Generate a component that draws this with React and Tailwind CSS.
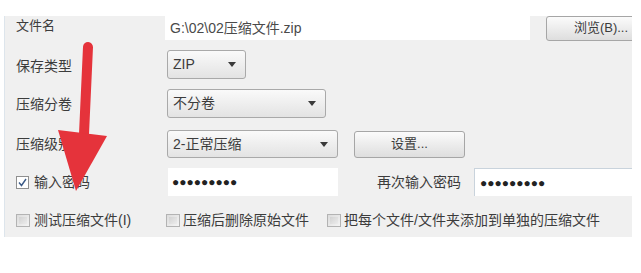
import React from "react";

const font = "font-['Liberation_Sans','Noto_Sans_CJK_SC',sans-serif]";

function Caret() {
  return (
    <svg width="8" height="5" viewBox="0 0 8 5" className="shrink-0">
      <path d="M0 0 H8 L4 5 Z" fill="#3a3a3a" />
    </svg>
  );
}

function Select({ value, width, height = "h-[29px]" }) {
  return (
    <div
      className={`${width} ${height} shrink-0 flex items-center justify-between pl-[5px] pr-[9px] rounded-[3px] border border-[#a9a9a9] bg-gradient-to-b from-[#fafafa] to-[#e3e3e3] text-[14px] text-[#3c3c3c]`}
    >
      <span>{value}</span>
      <Caret />
    </div>
  );
}

function Button({ children, width, height }) {
  return (
    <div
      className={`${width} ${height} flex items-center justify-center rounded-[3px] border border-[#a6a6a6] bg-gradient-to-b from-[#fbfbfb] to-[#dedede] text-[13px] text-[#3c3c3c] shrink-0`}
    >
      {children}
    </div>
  );
}

function Check({ checked }) {
  if (checked) {
    return (
      <div className="w-[13px] h-[13px] border border-[#8f8f8f] bg-white flex items-center justify-center shrink-0">
        <svg width="9" height="9" viewBox="0 0 9 9">
          <path d="M1 4.5 L3.5 7.5 L8 1" fill="none" stroke="#3b5a87" strokeWidth="1.4" />
        </svg>
      </div>
    );
  }
  return (
    <div className="w-[14px] h-[13px] border border-[#b3b3b3] bg-gradient-to-br from-[#dcdcdc] to-[#f4f4f4] p-[2px] shrink-0">
      <div className="w-full h-full bg-gradient-to-br from-[#d2d2d2] to-[#ececec]" />
    </div>
  );
}

export default function App() {
  return (
    <div className={`relative w-[641px] h-[273px] bg-white overflow-hidden pt-[16px] ${font}`}>
      <div className="ml-[4px] w-[628px] h-[221px] bg-[#f0f0f0] border-l border-[#dde5ec] overflow-hidden text-[#3c3c3c]">
        {/* 文件名 */}
        <div className="flex items-center h-[24px]">
          <div className="w-[160px] shrink-0 pl-[11px] text-[13px] -mt-[5px]">文件名</div>
          <div className="w-[365px] shrink-0 h-[24px] bg-white flex items-center pl-[5px] text-[14px] text-[#4a4a4a]">
            G:\02\02压缩文件.zip
          </div>
          <div className="ml-[16px] shrink-0">
            <Button width="w-[110px]" height="h-[25px]">浏览(B)...</Button>
          </div>
        </div>

        {/* 保存类型 */}
        <div className="flex items-center h-[29px] mt-[10px]">
          <div className="w-[162px] shrink-0 pl-[11px] text-[14px] mt-[4px]">保存类型</div>
          <Select value="ZIP" width="w-[79px]" />
        </div>

        {/* 压缩分卷 */}
        <div className="flex items-center h-[29px] mt-[10px]">
          <div className="w-[162px] shrink-0 pl-[11px] text-[14px] mt-[1px]">压缩分卷</div>
          <Select value="不分卷" width="w-[159px]" />
        </div>

        {/* 压缩级别 */}
        <div className="flex items-center h-[28px] mt-[12px]">
          <div className="w-[162px] shrink-0 pl-[11px] text-[14px]">压缩级别</div>
          <Select value="2-正常压缩" width="w-[171px]" height="h-[28px]" />
          <div className="ml-[16px] shrink-0">
            <Button width="w-[111px]" height="h-[27px]">设置...</Button>
          </div>
        </div>

        {/* 输入密码 */}
        <div className="flex items-center h-[28px] mt-[10px]">
          <div className="w-[163px] shrink-0 pl-[11px] flex items-center gap-[5px] text-[14px]">
            <Check checked />
            <span>输入密码</span>
          </div>
          <div className="w-[170px] shrink-0 h-[28px] bg-white flex items-center pl-[4px] text-[12px] text-[#222]">
            ●●●●●●●●●
          </div>
          <div className="w-[136px] shrink-0 pr-[13px] text-right text-[14px]">再次输入密码</div>
          <div className="flex-1 h-[28px] bg-white border-t border-l border-[#c9d3dc] flex items-center pl-[5px] text-[12px] text-[#222]">
            ●●●●●●●●●
          </div>
        </div>

        {/* options */}
        <div className="flex items-center h-[20px] mt-[14px] text-[14px]">
          <div className="w-[161px] shrink-0 pl-[11px] flex items-center gap-[4px]">
            <Check />
            <span>测试压缩文件(I)</span>
          </div>
          <div className="w-[161px] shrink-0 flex items-center gap-[3px]">
            <Check />
            <span>压缩后删除原始文件</span>
          </div>
          <div className="flex items-center gap-[3px]">
            <Check />
            <span>把每个文件/文件夹添加到单独的压缩文件</span>
          </div>
        </div>
      </div>

      {/* red arrow */}
      <svg className="absolute left-0 top-0" width="641" height="273" viewBox="0 0 641 273">
        <path d="M88 47 L84 134" stroke="#e5333b" strokeWidth="10" strokeLinecap="round" fill="none" />
        <path d="M58 130 L107 136 L76 191 Z" fill="#e5333b" />
      </svg>
    </div>
  );
}
